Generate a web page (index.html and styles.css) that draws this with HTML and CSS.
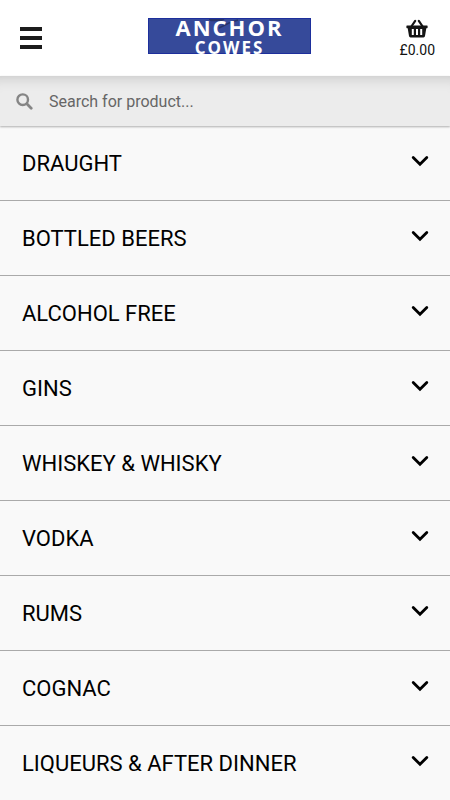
FILE: index.html
```html
<!DOCTYPE html>
<html lang="en">
<head>
  <meta charset="UTF-8">
  <meta name="viewport" content="width=device-width, initial-scale=1.0">
  <title>Anchor Cowes</title>
  <link rel="stylesheet" href="styles.css">
</head>
<body>
  <!-- Shared chevron for the category rows -->
  <svg class="symbols" aria-hidden="true">
    <symbol id="chevron" viewBox="0 0 18 12">
      <path d="M2.200 2.500 9 9.300l6.800-6.800" fill="none" stroke="currentColor" stroke-width="2.800" stroke-linecap="round"/>
    </symbol>
  </svg>

  <header class="header">
    <button class="menu-button" type="button" aria-label="Menu">
      <svg width="22" height="22" viewBox="0 0 22 22">
        <path d="M0 0h22v4H0zM0 9h22v4H0zM0 18h22v4H0z" fill="#1c1c1c"/>
      </svg>
    </button>

    <a class="logo" href="#">
      <svg class="logo-mark" width="30" height="10" viewBox="0 0 30 10" aria-hidden="true">
        <path d="M0 0h15l-3 1.500H2zM10 9 20 4 29 1" fill="none" stroke="#27346b" stroke-width="1.500"/>
      </svg>
      <span class="logo-name">ANCHOR</span>
      <span class="logo-town">COWES</span>
    </a>

    <a class="basket" href="#">
      <svg width="22" height="19" viewBox="0 0 22 19" aria-hidden="true">
        <path d="M5 8 9.200 1.800M17 8 12.800 1.800" fill="none" stroke="#141414" stroke-width="2.200" stroke-linecap="round"/>
        <path fill="#141414" fill-rule="evenodd" d="M1 6.500h20a.6.6 0 0 1 .6.6v1.500a.6.6 0 0 1-.6.600h-.7l-1.300 7.800a1.600 1.600 0 0 1-1.600 1.400H4.600A1.600 1.600 0 0 1 3 17L1.700 9.200H1a.6.6 0 0 1-.6-.6V7.100a.6.6 0 0 1 .6-.6zM5.800 10v6h2v-6zM10 10v6h2v-6zM14.200 10v6h2v-6z"/>
      </svg>
      <span>£0.00</span>
    </a>
  </header>

  <form class="search">
    <svg width="17" height="17" viewBox="0 0 17 17" aria-hidden="true">
      <circle cx="6.700" cy="6.700" r="5.300" fill="none" stroke="#858585" stroke-width="2.400"/>
      <path d="m10.800 10.800 4.400 4.400" stroke="#858585" stroke-width="2.800" stroke-linecap="round"/>
    </svg>
    <input type="text" name="search" placeholder="Search for product..." aria-label="Search for product">
  </form>

  <main class="categories">
    <button class="category" type="button">DRAUGHT <svg class="chevron"><use href="#chevron"/></svg></button>
    <button class="category" type="button">BOTTLED BEERS <svg class="chevron"><use href="#chevron"/></svg></button>
    <button class="category" type="button">ALCOHOL FREE <svg class="chevron"><use href="#chevron"/></svg></button>
    <button class="category" type="button">GINS <svg class="chevron"><use href="#chevron"/></svg></button>
    <button class="category" type="button">WHISKEY &amp; WHISKY <svg class="chevron"><use href="#chevron"/></svg></button>
    <button class="category" type="button">VODKA <svg class="chevron"><use href="#chevron"/></svg></button>
    <button class="category" type="button">RUMS <svg class="chevron"><use href="#chevron"/></svg></button>
    <button class="category" type="button">COGNAC <svg class="chevron"><use href="#chevron"/></svg></button>
    <button class="category" type="button">LIQUEURS &amp; AFTER DINNER <svg class="chevron"><use href="#chevron"/></svg></button>
  </main>
</body>
</html>
```
FILE: styles.css
```css
* {
  box-sizing: border-box;
}

/* The last category runs past the fold, so keep the scrollbar out of view */
html {
  scrollbar-width: none;
}

body {
  margin: 0;
  background: #f9f9f9;
  color: #000;
  font-family: Roboto, sans-serif;
}

button {
  border: none;
  background: none;
  color: inherit;
  font-family: inherit;
  cursor: pointer;
}

.symbols {
  display: none;
}

/* Header */
.header {
  display: grid;
  grid-template-columns: 1fr auto 1fr;
  align-items: center;
  height: 76px;
  padding: 0 15px 0 20px;
  background: #fff;
}

.menu-button {
  justify-self: start;
  display: flex;
  padding: 0;
}

.logo {
  position: relative;
  display: flex;
  flex-direction: column;
  align-items: center;
  width: 163px;
  height: 36px;
  margin: 0 0 4px 4px;
  background: #364a9a;
  border: 1px solid #1d2f9c;
  color: #fff;
  font-family: "Open Sans", sans-serif;
  font-weight: 700;
  text-decoration: none;
}

/* Anchor fluke showing behind the name */
.logo-mark {
  position: absolute;
  top: 0;
  left: 60px;
}

.logo-name {
  z-index: 1;
  font-size: 22px;
  line-height: 16px;
  letter-spacing: 2px;
}

.logo-town {
  z-index: 1;
  font-size: 17px;
  line-height: 26px;
  letter-spacing: 2px;
}

.basket {
  justify-self: end;
  display: flex;
  flex-direction: column;
  align-items: center;
  gap: 4px;
  color: #111;
  font-size: 14px;
  line-height: 16px;
  text-decoration: none;
}

/* Search bar, shaded at the top by the header */
.search {
  display: flex;
  align-items: center;
  gap: 16px;
  height: 50px;
  padding: 0 16px;
  background: #ececec;
  box-shadow: 0 1px 2px rgba(0, 0, 0, 0.3), inset 0 16px 16px -16px rgba(0, 0, 0, 0.2);
}

.search input {
  flex: 1;
  min-width: 0;
  padding: 0;
  border: none;
  outline: none;
  background: none;
  font-family: inherit;
  font-size: 16px;
}

.search input::placeholder {
  color: #666;
}

/* Category list */
.category {
  display: flex;
  justify-content: space-between;
  align-items: center;
  width: 100%;
  height: 75px;
  padding: 0 21px 0 22px;
  border-bottom: 1px solid #aaa;
  font-size: 22px;
  text-align: left;
}

.chevron {
  width: 18px;
  height: 12px;
  margin-bottom: 4px;
}
```
